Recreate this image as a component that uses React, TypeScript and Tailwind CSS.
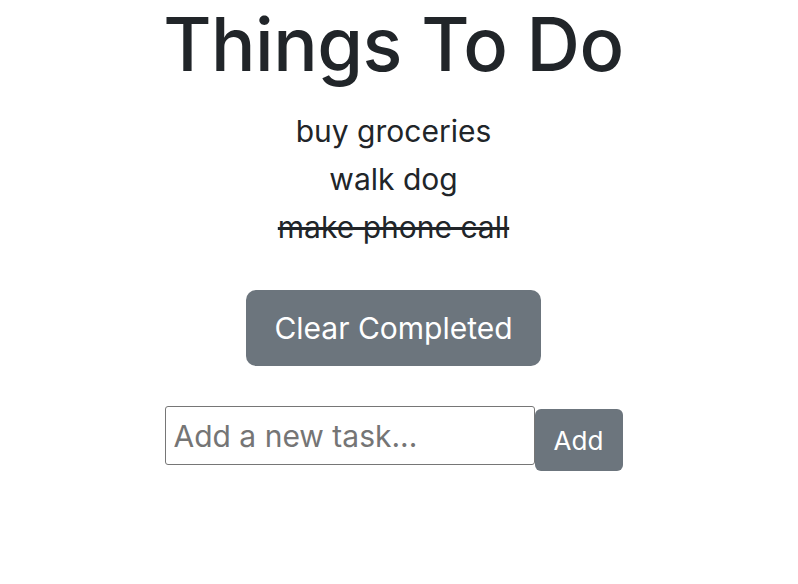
export default function App() {
  return (
    <div className="flex flex-col items-center bg-white text-[#212529] min-h-[584px] pr-[11px]" style={{ fontFamily: 'Inter, "Noto Sans", sans-serif' }}>
      <h1 className="text-[74px] leading-[88px] font-medium tracking-[-0.5px] mt-0">Things To Do</h1>
      <ul className="mt-[19px] flex flex-col items-center text-[30px] leading-[48px]">
        <li>buy groceries</li>
        <li>walk dog</li>
        <li className="line-through">make phone call</li>
      </ul>
      <button className="mt-[39px] h-[76px] px-[28px] rounded-[10px] bg-[#6c757d] text-white text-[30px]">Clear Completed</button>
      <div className="mt-[40px] flex items-start">
        <input
          placeholder="Add a new task..."
          className="w-[370px] h-[59px] border border-[#767676] rounded-[3px] px-[8px] text-[30px] placeholder:text-[#757575] outline-none"
        />
        <button className="mt-[3px] w-[88px] h-[62px] rounded-[6px] bg-[#6c757d] text-white text-[26px]">Add</button>
      </div>
    </div>
  );
}
